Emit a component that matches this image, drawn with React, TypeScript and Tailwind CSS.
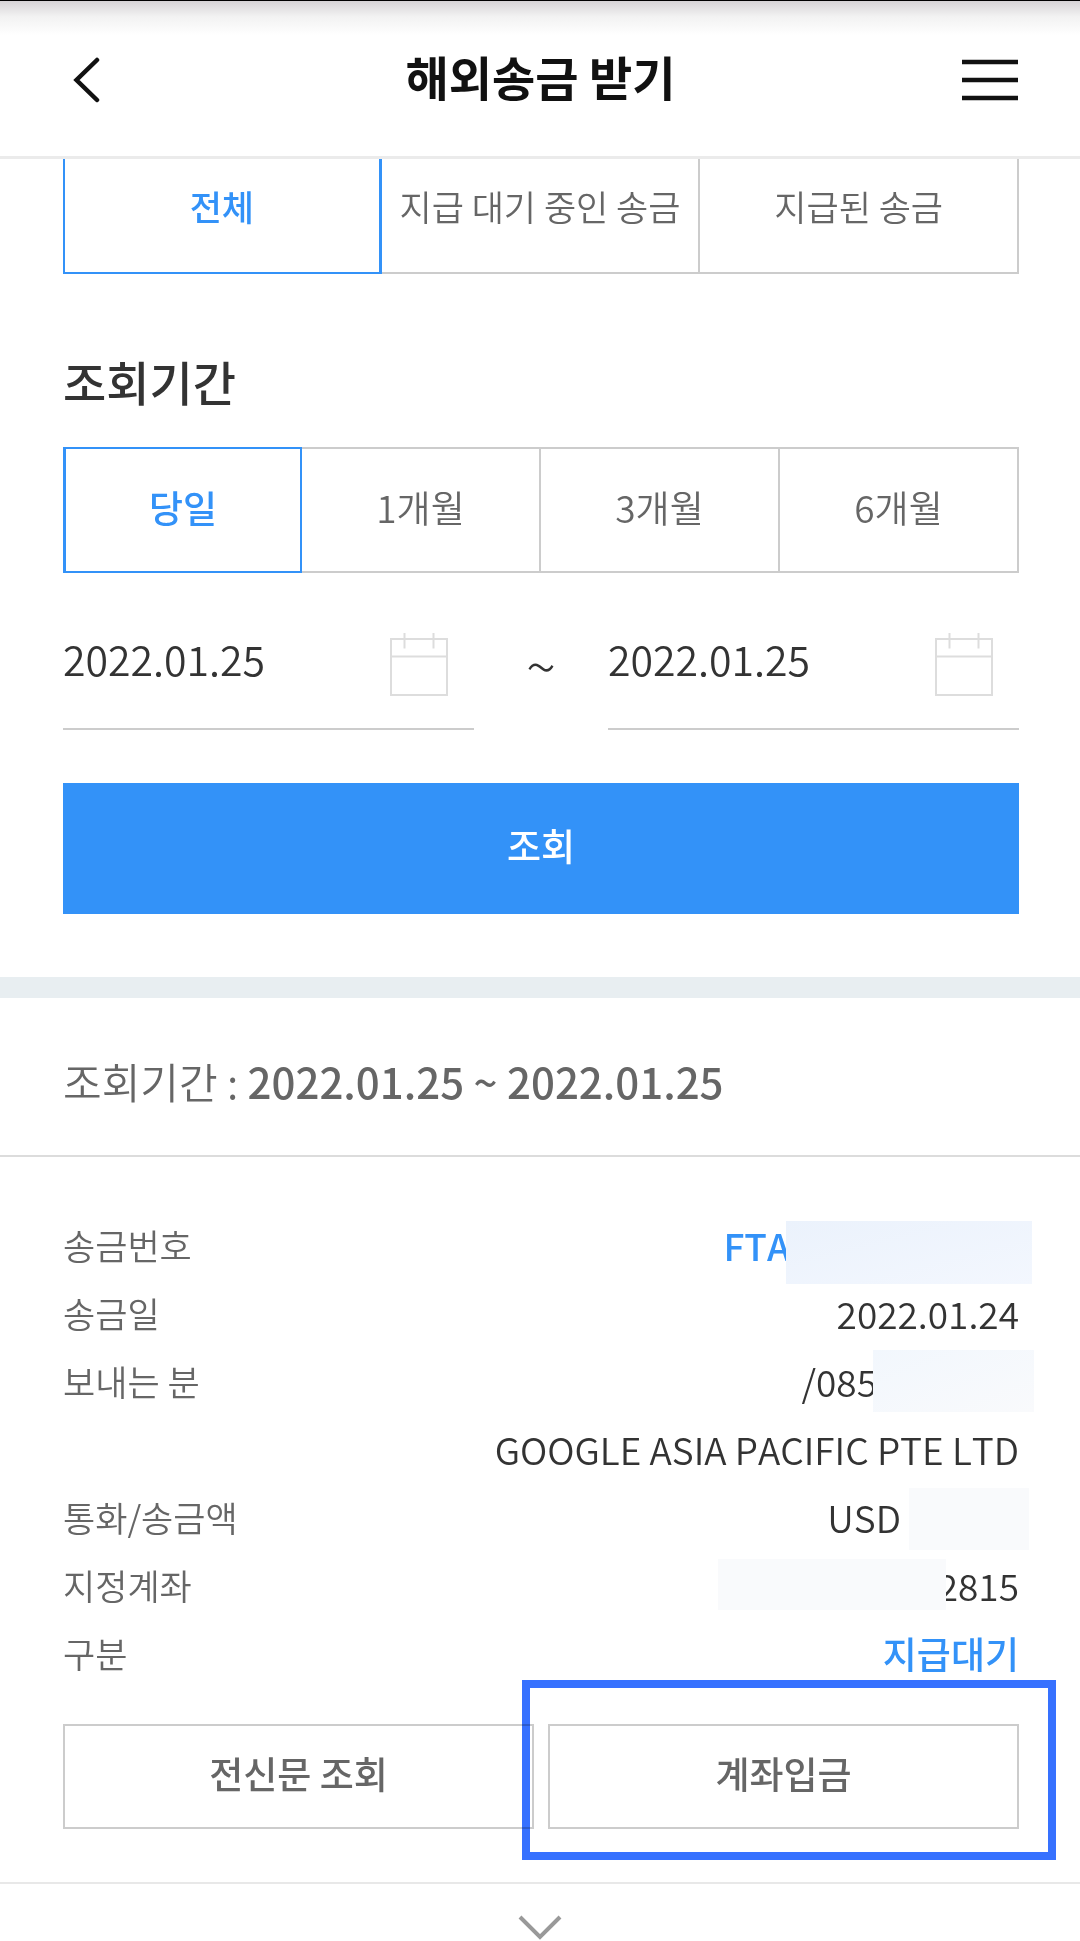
import React, { useState } from 'react';

const tabs = ['전체', '지급 대기 중인 송금', '지급된 송금'];
const periods = ['당일', '1개월', '3개월', '6개월'];

const CalendarIcon = () => (
    <svg width="58" height="63" viewBox="0 0 58 63" fill="none" stroke="#dddddd" strokeWidth="2">
        <path d="M1 6H57V62H1ZM1 23.5H57M14.5 0V15.5M43.5 0V15.5" />
    </svg>
);

const DateField = ({ id, label, value, onChange }: any) => (
    <div className="flex h-[132px] flex-1 items-center border-b-2 border-[#cccccc] pt-[2px] pr-[26px]">
        <input
            type="text"
            id={id}
            aria-label={label}
            value={value}
            onChange={(e) => onChange(e.target.value)}
            className="h-[80px] w-full min-w-0 flex-1 bg-transparent pb-[12px] text-[41px] text-[#333333] outline-none"
        />
        <button type="button" aria-label={label + ' 달력'} className="shrink-0">
            <CalendarIcon />
        </button>
    </div>
);

const Row = ({ label, children }: any) => (
    <div className="flex h-[68px] items-start justify-between leading-[68px]">
        <dt className="text-[35px] text-[#666666]">{label}</dt>
        <dd className="flex items-start text-[37px] text-[#333333] [font-kerning:none]">{children}</dd>
    </div>
);

const App = () => {
    const [tab, setTab] = useState('전체');
    const [period, setPeriod] = useState('당일');
    const [desde, setDesde] = useState('2022.01.25');
    const [hasta, setHasta] = useState('2022.01.25');

    return (
        <div className="w-full overflow-hidden bg-white font-['Noto_Sans_CJK_KR','Noto_Sans',sans-serif] font-[350]">
            <header className="flex h-[159px] items-center justify-between border-t border-b-3 border-t-black border-b-[#ebebeb] bg-linear-to-b from-[#d6d3d6] via-[#f2f2f2] via-10% to-white to-22% pt-[2px] pr-[62px] pl-[73px]">
                <button type="button" aria-label="뒤로" className="flex w-[46px]">
                    <svg width="27" height="46" viewBox="0 0 27 46" fill="none" stroke="#111111" strokeWidth="4.5" strokeLinecap="round">
                        <path d="M24 3L3.500 23L24 43" />
                    </svg>
                </button>
                <h1 className="pb-[8px] text-[47px] leading-[60px] font-bold text-[#111111]">해외송금 받기</h1>
                <button type="button" aria-label="메뉴" className="flex w-[56px]">
                    <svg width="56" height="42" viewBox="0 0 56 42" fill="none" stroke="#111111" strokeWidth="4.5">
                        <path d="M0 3H56M0 21H56M0 39H56" />
                    </svg>
                </button>
            </header>

            <main>
                <section className="pr-[61px] pl-[63px]">
                    <div className="grid grid-cols-3">
                        {tabs.map((t) => (
                            <button
                                key={t}
                                type="button"
                                onClick={() => setTab(t)}
                                className={
                                    t === tab
                                        ? 'h-[115px] border-r-3 border-b-2 border-l-2 border-[#3392f8] pb-[19px] text-[35px] font-medium text-[#3392f8]'
                                        : 'h-[115px] border-r-2 border-b-2 border-[#cccccc] pb-[19px] text-[35px] text-[#666666]'
                                }
                            >
                                {t}
                            </button>
                        ))}
                    </div>

                    <h2 className="mt-[77px] text-[47px] leading-[60px] font-medium text-[#333333]">조회기간</h2>
                    <div className="mt-[36px] grid grid-cols-4">
                        {periods.map((p) => (
                            <button
                                key={p}
                                type="button"
                                onClick={() => setPeriod(p)}
                                className={
                                    p === period
                                        ? 'h-[126px] border-2 border-l-3 border-[#3392f8] pb-[4px] text-[37px] font-medium text-[#3392f8]'
                                        : 'h-[126px] border-y-2 border-r-2 border-[#cccccc] pb-[4px] text-[37px] text-[#666666]'
                                }
                            >
                                {p}
                            </button>
                        ))}
                    </div>

                    <div className="mt-[25px] flex h-[132px] items-center">
                        <DateField id="desde" label="시작일" value={desde} onChange={setDesde} />
                        <span className="w-[134px] text-center text-[56px] leading-[60px] font-light text-[#333333]">~</span>
                        <DateField id="hasta" label="종료일" value={hasta} onChange={setHasta} />
                    </div>

                    <button type="button" className="mt-[53px] h-[131px] w-full bg-[#3392f8] pb-[5px] text-[37px] font-medium text-white">
                        조회
                    </button>
                </section>

                <div className="mt-[63px] h-[21px] bg-[#e8eef1]" />

                <p className="h-[159px] border-b-2 border-[#dcdcdc] pt-[48px] pl-[63px] text-[42px] leading-[70px] text-[#666666]">
                    조회기간 : <strong className="font-medium">{desde} ~ {hasta}</strong>
                </p>

                <section className="border-b-2 border-[#e8e8e8] pt-[54px] pr-[61px] pb-[53px] pl-[63px]">
                    <dl>
                        <Row label="송금번호">
                            <span className="font-medium text-[#3392f8]">FTA</span>
                            <span className="mt-[10px] -mr-[13px] -ml-1 h-[63px] w-[246px] bg-linear-to-br from-[#ebf2fc] to-[#f3f7fe]" />
                        </Row>
                        <Row label="송금일">2022.01.24</Row>
                        <Row label="보내는 분">
                            /085
                            <span className="mt-[3px] -mr-[15px] -ml-1 h-[62px] w-[161px] bg-linear-to-br from-[#f2f7fd] to-[#f9fafc]" />
                        </Row>
                        <Row label="">GOOGLE ASIA PACIFIC PTE LTD</Row>
                        <Row label="통화/송금액">
                            USD
                            <span className="mt-[5px] -mr-[10px] ml-2 h-[62px] w-[120px] bg-[#f9fafc]" />
                        </Row>
                        <Row label="지정계좌">
                            <span className="z-10 mt-[8px] -mr-2 h-[51px] w-[228px] bg-[#f9fafc]" />
                            2815
                        </Row>
                        <Row label="구분">
                            <span className="font-medium text-[#3392f8]">지급대기</span>
                        </Row>
                    </dl>

                    <div className="mt-[37px] grid grid-cols-2 gap-[14px]">
                        <button type="button" className="h-[105px] border-2 border-[#cccccc] pb-[6px] text-[37px] font-medium text-[#666666]">
                            전신문 조회
                        </button>
                        <button type="button" className="relative h-[105px] border-2 border-[#cccccc] pb-[6px] text-[37px] font-medium text-[#666666]">
                            계좌입금
                            <span className="absolute -top-[46px] -right-[39px] -bottom-[33px] -left-[28px] border-8 border-[#3671ff] mix-blend-multiply" />
                        </button>
                    </div>
                </section>

                <button type="button" aria-label="더보기" className="flex h-[57px] w-full justify-center pt-[31px]">
                    <svg width="44" height="26" viewBox="0 0 44 26" fill="none" stroke="#999999" strokeWidth="4">
                        <path d="M2 2L22 22L42 2" />
                    </svg>
                </button>
            </main>
        </div>
    );
};

export default App;
